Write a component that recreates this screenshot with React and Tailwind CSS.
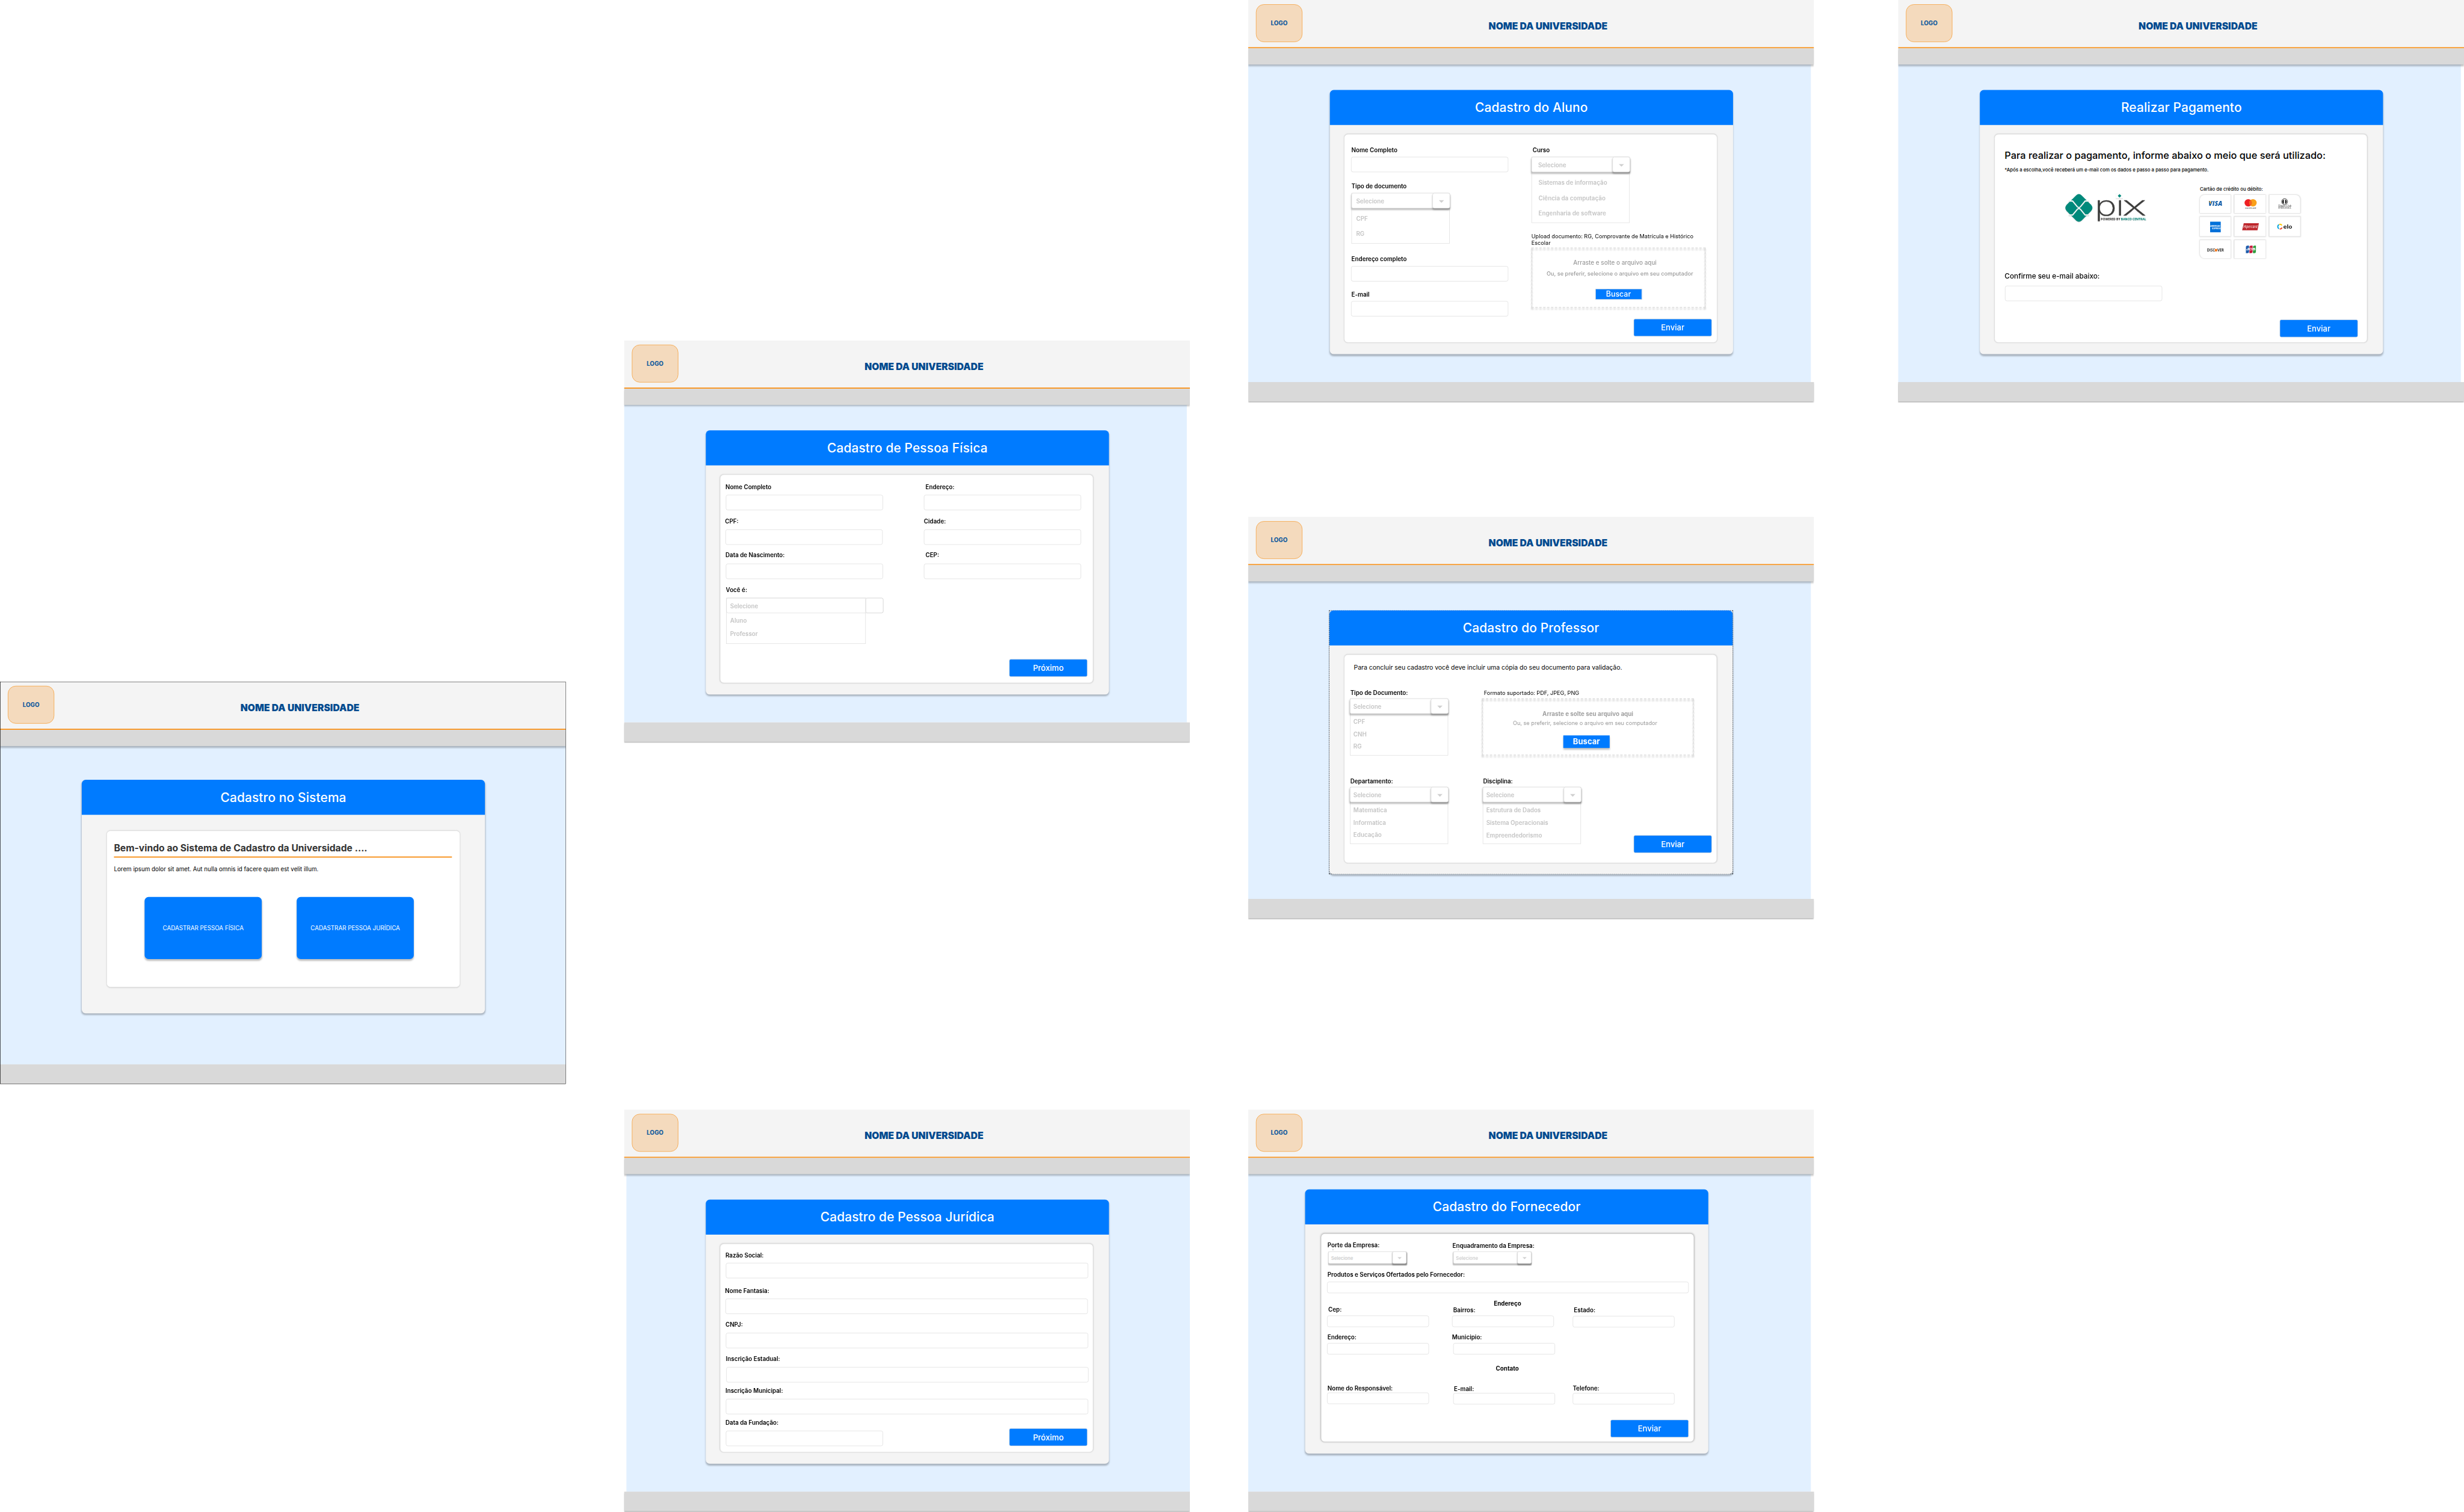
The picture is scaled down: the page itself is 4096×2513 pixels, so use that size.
import React from "react";

function Frame({ place, body = "w-[1432px]", outlined = false, children }) {
  return (
    <section className={`absolute flex h-[1024px] w-[1440px] flex-col overflow-hidden ${place}`}>
      <header className="flex h-[120px] shrink-0 items-start bg-[#f4f4f4]">
        <div className="mt-[11px] ml-5 flex h-24 w-[118px] items-center justify-center rounded-[20px] border border-[#f7931e] bg-[#f4dabd] pt-px text-[15px] font-extrabold text-[#1a5f9f]">
          LOGO
        </div>
        <h1 className="mt-[52px] ml-[474px] text-[24px] leading-[30px] font-black text-[#004a8f]">NOME DA UNIVERSIDADE</h1>
      </header>
      <div className="h-[3px] shrink-0 bg-[#f7931e]" />
      <div className="z-10 h-[41px] shrink-0 bg-[#d9d9d9] shadow-[0_4px_4px_rgba(0,0,0,0.25)]" />
      <main className={`flex flex-1 flex-col items-start bg-[#e2f0ff] ${body}`}>{children}</main>
      {outlined ? (
        <footer className="h-[50px] shrink-0 bg-[#d9d9d9]" />
      ) : (
        <div className="h-[52px] shrink-0">
          <footer className="h-[49px] bg-[#d9d9d9] shadow-[0_4px_4px_rgba(0,0,0,0.25)]" />
        </div>
      )}
      {outlined && <div className="pointer-events-none absolute inset-0 z-20 border border-black" />}
    </section>
  );
}

function Card({ title, place, panel, children }) {
  return (
    <div className={`flex w-[1026px] flex-col items-start rounded-[10px] bg-[#f4f4f4] shadow-[0_4px_4px_rgba(0,0,0,0.25)] ${place}`}>
      <h2 className="flex h-[89px] w-full shrink-0 items-center justify-center rounded-t-[10px] bg-[#007bff] pt-px text-[32px] font-medium tracking-[0.2px] text-white [font-weight:550]">
        {title}
      </h2>
      <div className={`rounded-[10px] border bg-white ${panel}`}>{children}</div>
    </div>
  );
}

const PANEL = "border-[#d9d9d9] shadow-[0_0_3px_rgba(0,0,0,0.12)]";

const Label = ({ className = "", children }) => (
  <div className={`h-[18px] translate-x-px translate-y-px text-[15px] leading-[18px] font-semibold whitespace-nowrap text-black ${className}`}>{children}</div>
);

const Box = ({ className = "" }) => <div className={`shrink-0 rounded-[5px] border border-[#d9d9d9] bg-white ${className}`} />;

const Option = ({ className = "", children }) => (
  <div className={`h-[18px] translate-y-px text-[15px] leading-[18px] font-semibold whitespace-nowrap text-[#c4c4c4] ${className}`}>{children}</div>
);

const Submit = ({ className = "", children }) => (
  <button className={`block h-[45px] w-[199px] shrink-0 rounded-[4px] border border-[#d9d9d9] bg-[#007bff] text-[20px] font-medium text-white ${className}`}>{children}</button>
);

const Arrow = ({ className }) => (
  <svg viewBox="0 0 14 7" className={className}>
    <path d="M0 0H14L7 7Z" fill="#d0d0d0" />
  </svg>
);

function DropZone({ className, children }) {
  return (
    <div className={`relative flex flex-col items-center ${className}`}>
      <div className="pointer-events-none absolute inset-0 border-2 border-dashed border-[#d9d9d9] drop-shadow-[0_4px_2px_rgba(0,0,0,0.25)]" />
      {children}
    </div>
  );
}

function Select({ className, pad, children }) {
  return (
    <div className={`w-[250px] border border-[#d9d9d9] ${className}`}>
      <div className="-m-px flex h-[39px] w-[250px] items-center justify-between rounded-[4px] border border-[#d9d9d9] bg-white shadow-[0_4px_4px_rgba(0,0,0,0.25)]">
        <Option className={pad}>Selecione</Option>
        <span className="-mr-[2px] flex h-[39px] w-[45px] items-center justify-center rounded-[5px] border border-[#d9d9d9] bg-white pt-[3px] shadow-[0_4px_4px_rgba(0,0,0,0.25)]">
          <Arrow className="h-[7px] w-[14px]" />
        </span>
      </div>
      <div className={pad}>{children}</div>
    </div>
  );
}

function SmallSelect({ className }) {
  return (
    <div className={`h-[35px] w-[199px] border-x border-[#e2e2e2] ${className}`}>
      <div className="-mx-px flex h-[31px] w-[199px] items-center justify-between rounded-[4px] border border-[#d9d9d9] bg-white shadow-[0_3px_3px_rgba(0,0,0,0.25)]">
        <span className="ml-[6px] pt-[2px] text-[11.8px] leading-[14px] font-semibold text-[#cdcdcd]">Selecione</span>
        <span className="-mr-px flex h-[31px] w-[36px] items-center justify-center rounded-[4px] border border-[#d9d9d9] bg-white pt-[3px] shadow-[0_3px_3px_rgba(0,0,0,0.3)]">
          <Arrow className="h-[5.5px] w-[11px]" />
        </span>
      </div>
    </div>
  );
}

function Sistema() {
  const tile = "flex h-[158px] w-[298px] items-center justify-center rounded-[10px] bg-[#007bff] text-[15px] text-white shadow-[0_4px_4px_rgba(0,0,0,0.25)]";
  return (
    <Frame place="left-0 top-[1734px]" body="w-full" outlined>
      <Card title="Cadastro no Sistema" place="mt-[86px] ml-[208px] h-[594px]" panel={`mt-[40px] ml-[63px] h-[399px] w-[900px] ${PANEL}`}>
        <h3 className="mt-[29px] ml-[18px] text-[24px] leading-[30px] font-semibold whitespace-nowrap text-[#333333] [font-weight:650]">
          Bem-vindo ao Sistema de Cadastro da Universidade ....
        </h3>
        <hr className="mt-[6px] ml-[18px] h-[3px] w-[860px] border-0 bg-[#f7931e]" />
        <p className="mt-[19px] ml-[18px] text-[15px] leading-[20px] text-black">Lorem ipsum dolor sit amet. Aut nulla omnis id facere quam est velit illum.</p>
        <div className="mt-[61px] ml-[96px] flex gap-[89px]">
          <div className={tile}>CADASTRAR PESSOA FÍSICA</div>
          <div className={tile}>CADASTRAR PESSOA JURÍDICA</div>
        </div>
      </Card>
    </Frame>
  );
}

function PessoaFisica() {
  return (
    <Frame place="left-[1588px] top-[866px]">
      <Card title="Cadastro de Pessoa Física" place="mt-[65px] ml-[208px] h-[672px]" panel={`mt-[23px] ml-[36px] flex h-[531px] w-[950px] items-start ${PANEL}`}>
        <div className="w-[518px] pl-[14px]">
          <Label className="mt-[21px] -ml-[2px]">Nome Completo</Label>
          <Box className="mt-[12px] h-[39px] w-[400px]" />
          <Label className="mt-[19px] -ml-[3px]">CPF:</Label>
          <Box className="mt-[12px] -ml-px h-[39px] w-[400px]" />
          <Label className="mt-[17px] -ml-[2px]">Data de Nascimento:</Label>
          <Box className="mt-[13px] h-[39px] w-[400px]" />
          <Label className="mt-[18px] -ml-px">Você é:</Label>
          <div className="mt-[12px] ml-px w-[355px]">
            <div className="flex h-[39px] w-[400px] items-center justify-between rounded-[5px] border border-[#d9d9d9]">
              <Option className="ml-[9px] pt-px">Selecione</Option>
              <span className="-mr-px h-[39px] w-[45px] rounded-[5px] border border-[#d9d9d9]" />
            </div>
            <div className="-mt-[39px] h-[117px] border border-[#d9d9d9] pl-[9px]">
              <Option className="mt-[48px]">Aluno</Option>
              <Option className="mt-[15px]">Professor</Option>
            </div>
          </div>
        </div>
        <div>
          <Label className="mt-[21px] ml-[3px]">Endereço:</Label>
          <Box className="mt-[12px] h-[39px] w-[400px]" />
          <Label className="mt-[19px] -ml-px">Cidade:</Label>
          <Box className="mt-[12px] h-[39px] w-[400px]" />
          <Label className="mt-[17px] ml-[3px]">CEP:</Label>
          <Box className="mt-[13px] h-[39px] w-[400px]" />
          <Submit className="mt-[204px] ml-[217px]">Próximo</Submit>
        </div>
      </Card>
    </Frame>
  );
}

function PessoaJuridica() {
  return (
    <Frame place="left-[1588px] top-[2823px]" body="ml-[6px] w-[1434px]">
      <Card title="Cadastro de Pessoa Jurídica" place="mt-[65px] ml-[202px] h-[672px]" panel={`mt-[23px] ml-[36px] h-[531px] w-[950px] pl-[14px] ${PANEL}`}>
        <Label className="mt-[20px] -ml-[2px]">Razão Social:</Label>
        <Box className="mt-[10px] h-[39px] w-[922px]" />
        <Label className="mt-[22px] -ml-[3px]">Nome Fantasia:</Label>
        <Box className="mt-[12px] -ml-px h-[39px] w-[922px]" />
        <Label className="mt-[18px] -ml-[2px]">CNPJ:</Label>
        <Box className="mt-[12px] h-[39px] w-[922px]" />
        <Label className="mt-[18px] -ml-px">Inscrição Estadual:</Label>
        <Box className="mt-[12px] ml-px h-[39px] w-[922px]" />
        <Label className="mt-[12px] -ml-[2px]">Inscrição Municipal:</Label>
        <Box className="mt-[12px] h-[39px] w-[922px]" />
        <div className="mt-[12px] flex items-end gap-[321px]">
          <div>
            <Label className="-ml-[2px]">Data da Fundação:</Label>
            <Box className="mt-[12px] h-[39px] w-[400px]" />
          </div>
          <Submit>Próximo</Submit>
        </div>
      </Card>
    </Frame>
  );
}

function Aluno() {
  return (
    <Frame place="left-[3176px] top-0">
      <Card title="Cadastro do Aluno" place="mt-[65px] ml-[208px] h-[672px]" panel={`mt-[23px] ml-[36px] flex h-[531px] w-[950px] items-start ${PANEL}`}>
        <div className="w-[476px] pl-[17px]">
          <Label className="mt-[31px]">Nome Completo</Label>
          <Box className="mt-[8px] h-[39px] w-[400px]" />
          <Label className="mt-[26px]">Tipo de documento</Label>
          <Select className="mt-[9px] ml-px h-[129px]" pad="pl-[11px]">
            <Option className="mt-[18px]">CPF</Option>
            <Option className="mt-[20px]">RG</Option>
          </Select>
          <Label className="mt-[29px]">Endereço completo</Label>
          <Box className="mt-[10px] h-[39px] w-[400px]" />
          <Label className="mt-[24px]">E-mail</Label>
          <Box className="mt-[8px] h-[39px] w-[400px]" />
        </div>
        <div>
          <Label className="mt-[30px] ml-[2px]">Curso</Label>
          <Select className="mt-[9px] h-[168px]" pad="pl-[16px]">
            <Option className="mt-[18px] ml-px">Sistemas de informação</Option>
            <Option className="mt-[21px] ml-px">Ciência da computação</Option>
            <Option className="mt-[21px] ml-px">Engenharia de software</Option>
          </Select>
          <p className="mt-[25px] h-[34px] w-[442px] text-[14px] leading-[17px] text-black">Upload documento: RG, Comprovante de Matrícula e Histórico Escolar</p>
          <DropZone className="mt-[4px] h-[153px] w-[443px] pt-[2px]">
            <p className="mt-[27px] mr-[18px] text-[15px] leading-[18px] font-medium tracking-[0.08px] text-[#999999]">Arraste e solte o arquivo aqui</p>
            <p className="mt-[10px] ml-[7px] text-[14px] leading-[18px] font-medium tracking-[0.04px] whitespace-nowrap text-[#999999]">
              Ou, se preferir, selecione o arquivo em seu computador
            </p>
            <button className="mt-[30px] h-[27px] w-[118px] border border-[#d9d9d9] bg-[#007bff] text-[19px] leading-[25px] font-medium text-white">Buscar</button>
          </DropZone>
          <Submit className="mt-[28px] ml-[260px]">Enviar</Submit>
        </div>
      </Card>
    </Frame>
  );
}

function Professor() {
  return (
    <Frame place="left-[3176px] top-[1315px]">
      <div className="mt-[74px] ml-[206px] h-[671px] w-[1028px] border border-dashed border-black">
        <Card title="Cadastro do Professor" place="-mt-px h-[671px]" panel={`mt-[23px] ml-[37px] h-[531px] w-[949px] ${PANEL}`}>
          <p className="mt-[22px] ml-[24px] text-[16px] leading-[20px] text-black">Para concluir seu cadastro você deve incluir uma cópia do seu documento para validação.</p>
          <div className="mt-[45px] ml-[14px] flex gap-[86px]">
            <div>
              <Label>Tipo de Documento:</Label>
              <Select className="mt-[6px] h-[145px]" pad="pl-[8px]">
                <Option className="mt-[11px]">CPF</Option>
                <Option className="mt-[14px]">CNH</Option>
                <Option className="mt-[13px]">RG</Option>
              </Select>
            </div>
            <div>
              <p className="ml-[5px] h-[18px] translate-y-px text-[14px] leading-[18px] text-black">Formato suportado: PDF, JPEG, PNG</p>
              <DropZone className="mt-[6px] h-[145px] w-[539px] pt-[2px]">
                <p className="mt-[28px] text-[15px] leading-[18px] font-bold text-[#a0a0a0]">Arraste e solte seu arquivo aqui</p>
                <p className="mt-[6px] mr-[14px] text-[14px] leading-[18px] text-[#999999]">Ou, se preferir, selecione o arquivo em seu computador</p>
                <button className="mt-[22px] mr-[7px] h-[32px] w-[118px] bg-[#007bff] text-[20px] leading-[30px] font-bold text-white shadow-[0_4px_4px_rgba(0,0,0,0.25)]">
                  Buscar
                </button>
              </DropZone>
            </div>
          </div>
          <div className="mt-[56px] ml-[14px] flex items-start">
            <div>
              <Label>Departamento:</Label>
              <Select className="mt-[6px] h-[145px]" pad="pl-[8px]">
                <Option className="mt-[11px]">Matematica</Option>
                <Option className="mt-[15px]">Informatica</Option>
                <Option className="mt-[13px]">Educação</Option>
              </Select>
            </div>
            <div className="ml-[88px]">
              <Label>Disciplina:</Label>
              <Select className="mt-[6px] h-[145px]" pad="pl-[8px]">
                <Option className="mt-[11px]">Estrutura de Dados</Option>
                <Option className="mt-[15px]">Sistema Operacionais</Option>
                <Option className="mt-[14px]">Empreendedorismo</Option>
              </Select>
            </div>
            <Submit className="mt-[147px] ml-[134px]">Enviar</Submit>
          </div>
        </Card>
      </div>
    </Frame>
  );
}

function Fornecedor() {
  return (
    <Frame place="left-[3176px] top-[2823px]">
      <Card
        title="Cadastro do Fornecedor"
        place="mt-[39px] ml-[145px] h-[672px]"
        panel="mt-[23px] ml-[40px] h-[531px] w-[950px] border-[#b8b8b8] pl-[15px] shadow-[0_0_4px_rgba(0,0,0,0.2)]"
      >
        <div className="mt-[20px] flex h-[60px]">
          <div className="w-[318px]">
            <Label>Porte da Empresa:</Label>
            <div className="mt-[2px] ml-[14px] h-px w-[2px] bg-[#444444]" />
            <SmallSelect className="mt-[4px] ml-[3px]" />
          </div>
          <div>
            <Label className="mt-[1px]">Enquadramento da Empresa:</Label>
            <div className="mt-[1px] ml-[15px] h-px w-[2px] bg-[#444444]" />
            <SmallSelect className="mt-[4px] ml-[3px]" />
          </div>
        </div>
        <Label className="mt-[14px]">Produtos e Serviços Ofertados pelo Fornecedor:</Label>
        <Box className="mt-[10px] h-[29px] w-[920px]" />
        <Label className="mt-[17px] mr-[17px] text-center [font-weight:700]">Endereço</Label>
        <div className="-mt-[3px] flex h-[56px]">
          <div className="w-[318px]">
            <Label className="ml-[2px]">Cep:</Label>
            <Box className="mt-[7px] h-[29px] w-[259px]" />
          </div>
          <div className="w-[307px]">
            <Label className="mt-[2px] ml-[2px]">Bairros:</Label>
            <Box className="mt-[5px] h-[29px] w-[259px]" />
          </div>
          <div>
            <Label className="mt-[2px] ml-[2px]">Estado:</Label>
            <Box className="mt-[6px] h-[29px] w-[259px]" />
          </div>
        </div>
        <div className="mt-[15px] flex">
          <div className="w-[318px]">
            <Label>Endereço:</Label>
            <Box className="mt-[6px] h-[29px] w-[259px]" />
          </div>
          <div>
            <Label className="-mt-px -ml-px">Municipio:</Label>
            <Box className="mt-[7px] ml-[3px] h-[29px] w-[259px]" />
          </div>
        </div>
        <Label className="mt-[26px] mr-[18px] text-center [font-weight:700]">Contato</Label>
        <div className="mt-[32px] flex h-[51px]">
          <div className="w-[318px]">
            <Label>Nome do Responsável:</Label>
            <Box className="mt-[3px] h-[29px] w-[259px]" />
          </div>
          <div className="w-[307px]">
            <Label className="mt-[2px] ml-[4px]">E-mail:</Label>
            <Box className="mt-[2px] ml-[3px] h-[29px] w-[259px]" />
          </div>
          <div>
            <Label className="-ml-px">Telefone:</Label>
            <Box className="mt-[4px] h-[29px] w-[259px]" />
          </div>
        </div>
        <Submit className="mt-[39px] ml-[721px]">Enviar</Submit>
      </Card>
    </Frame>
  );
}

function PixLogo({ className }) {
  return (
    <svg viewBox="0 0 208 76" className={className}>
      <path d="M29 4Q36 -2.500 43 4L67 28Q74 36 67 44L43 68Q36 74.500 29 68L5 44Q-2 36 5 28Z" fill="#00897b" />
      <path d="M10 18.500H20L32 33Q36 37 40 33L52 18.500H62M10 54H20L32 39.500Q36 35.500 40 39.500L52 54H62" fill="none" stroke="#eef3f2" strokeWidth="3.200" />
      <g fontFamily="Inter" fontWeight="200" fill="#3c3c3b" stroke="#3c3c3b" strokeWidth="0.500">
        <text transform="translate(76 55) scale(1.4 1)" fontSize="68">p</text>
        <text transform="translate(130 55) scale(1.4 1)" fontSize="68">i</text>
        <text transform="translate(146 55) scale(1.78 1)" fontSize="68">x</text>
      </g>
      <rect x="130" y="-1" width="18" height="13" fill="white" />
      <path d="M139.500 0.500L144 5.300L139.500 10L135 5.300Z" fill="#00897b" />
      <text x="92" y="68" fontFamily="Open Sans" fontWeight="700" fontSize="7.800" textLength="115" lengthAdjust="spacingAndGlyphs" fill="#3c3c3b">
        POWERED BY <tspan fill="#00897b">BANCO CENTRAL</tspan>
      </text>
    </svg>
  );
}

const Brand = ({ children }) => (
  <svg viewBox="0 0 78 46" className="h-[46px] w-[78px]">
    {children}
  </svg>
);

function Brands() {
  const tile = "flex items-center justify-center rounded-[1px] bg-white shadow-[0_0_3px_1px_rgba(0,0,0,0.13)]";
  return (
    <div className="grid grid-cols-[78px_79px_78px] grid-rows-[46px_49px_46px] gap-x-[10px] gap-y-[10px]">
      <div className={`${tile} rounded-tl-[12px]`}>
        <Brand>
          <text x="22" y="27.500" fontFamily="Open Sans" fontWeight="800" fontStyle="italic" fontSize="15" textLength="35" lengthAdjust="spacingAndGlyphs" fill="#0e5ba8">VISA</text>
          <path d="M22 16.300H27L29.500 24Q26.500 19 22 16.300Z" fill="#f7a11a" />
        </Brand>
      </div>
      <div className={tile}>
        <Brand>
          <circle cx="34" cy="20" r="9.500" fill="#ee2024" />
          <circle cx="46" cy="20" r="9.500" fill="#f9a01b" />
          <path d="M40 12.600A9.500 9.500 0 0 1 40 27.400A9.500 9.500 0 0 1 40 12.600Z" fill="#f26522" />
          <text x="26" y="34.500" fontFamily="Inter" fontSize="5" textLength="28" lengthAdjust="spacingAndGlyphs" fill="#333333">mastercard</text>
        </Brand>
      </div>
      <div className={`${tile} rounded-tr-[12px]`}>
        <Brand>
          <circle cx="38.500" cy="17" r="7.600" fill="white" stroke="#111111" strokeWidth="1.200" />
          <path d="M36.500 11.500A5.800 5.800 0 0 0 36.500 22.500ZM40 11.500A5.800 5.800 0 0 1 40 22.500Z" fill="#111111" />
          <text x="22.500" y="30.500" fontFamily="Liberation Serif" fontSize="8" textLength="33" lengthAdjust="spacingAndGlyphs" fill="#333333">Diners Club</text>
          <text x="22.500" y="35" fontFamily="Liberation Serif" fontSize="4.500" textLength="33" lengthAdjust="spacingAndGlyphs" fill="#333333">INTERNATIONAL</text>
        </Brand>
      </div>
      <div className={tile}>
        <Brand>
          <rect x="26" y="10" width="27" height="27" fill="#0070d9" />
          <g fontFamily="Inter" fontWeight="700" fontSize="5.500" fill="white">
            <text x="26.500" y="23.500" textLength="25" lengthAdjust="spacingAndGlyphs">AMERICAN</text>
            <text x="31" y="29" textLength="22" lengthAdjust="spacingAndGlyphs">EXPRESS</text>
          </g>
        </Brand>
      </div>
      <div className={tile}>
        <Brand>
          <path d="M22.500 14H61L57.500 32H18.500Z" fill="#be262c" />
          <text x="21.500" y="26" fontFamily="Open Sans" fontStyle="italic" fontSize="9.500" textLength="36" lengthAdjust="spacingAndGlyphs" fill="white">Hipercard</text>
        </Brand>
      </div>
      <div className={tile}>
        <Brand>
          <g fill="none" strokeWidth="3">
            <path d="M24.500 17.300A5.800 5.800 0 0 1 31.500 19.500" stroke="#ffcb05" />
            <path d="M24 17.500A6.200 6.200 0 0 0 24 28" stroke="#00a4e0" />
            <path d="M32 25A5.800 5.800 0 0 1 26 28.600" stroke="#ef4123" />
          </g>
          <text x="35" y="27.500" fontFamily="Inter" fontWeight="700" fontSize="14" textLength="23" lengthAdjust="spacingAndGlyphs" fill="#1a1a1a">elo</text>
        </Brand>
      </div>
      <div className={`${tile} rounded-bl-[12px]`}>
        <Brand>
          <g fontFamily="Open Sans" fontWeight="700" fontSize="9.800" fill="#2b2b2b">
            <text x="18" y="29" textLength="20" lengthAdjust="spacingAndGlyphs">DISC</text>
            <text x="44.500" y="29" textLength="16.500" lengthAdjust="spacingAndGlyphs">VER</text>
          </g>
          <circle cx="41" cy="25.500" r="3.600" fill="#f47b20" />
        </Brand>
      </div>
      <div className={tile}>
        <Brand>
          <path d="M32 14H36V29Q36 33 32 33H28V18Q28 14 32 14Z" fill="#1c5bab" />
          <path d="M41 14H45V29Q45 33 41 33H37V18Q37 14 41 14Z" fill="#c4163a" />
          <path d="M50 14H53.500V29Q53.500 33 50 33H46V18Q46 14 50 14Z" fill="#2f9e3f" />
          <text x="28.500" y="26.500" fontFamily="Inter" fontWeight="800" fontSize="7.500" textLength="24" lengthAdjust="spacingAndGlyphs" fill="white">JCB</text>
        </Brand>
      </div>
    </div>
  );
}

function Pagamento() {
  return (
    <Frame place="left-[4830px] top-0">
      <Card title="Realizar Pagamento" place="mt-[65px] ml-[208px] h-[672px]" panel={`mt-[23px] ml-[37px] h-[531px] w-[949px] ${PANEL}`}>
        <h3 className="mt-[38px] ml-[25px] text-[25px] leading-[30px] font-normal whitespace-nowrap text-black [font-weight:450]">
          Para realizar o pagamento, informe abaixo o meio que será utilizado:
        </h3>
        <p className="mt-[14px] ml-[25px] text-[12px] leading-[16px] font-medium text-black">*Após a escolha,você receberá um e-mail com os dados e passo a passo para pagamento.</p>
        <div className="mt-[33px] ml-[178px] flex items-start">
          <PixLogo className="mt-[20px] h-[76px] w-[208px] overflow-visible drop-shadow-[0_1px_1px_rgba(0,0,0,0.25)]" />
          <div className="ml-[136px]">
            <p className="mb-[7px] text-[12px] leading-[16px] font-medium text-black">Cartão de crédito ou débito:</p>
            <Brands />
          </div>
        </div>
        <p className="mt-[35px] ml-[25px] text-[18px] leading-[22px] font-normal text-black [font-weight:450]">Confirme seu e-mail abaixo:</p>
        <Box className="mt-[13px] ml-[26px] h-[39px] w-[400px]" />
        <Submit className="mt-[47px] ml-[725px]">Enviar</Submit>
      </Card>
    </Frame>
  );
}

export default function App() {
  return (
    <div className="relative h-[2513px] w-[4096px] overflow-hidden bg-white">
      <div className="relative h-[3847px] w-[6270px] origin-top-left scale-[0.65327] font-['Inter',sans-serif] [font-optical-sizing:none]">
        <Sistema />
        <PessoaFisica />
        <PessoaJuridica />
        <Aluno />
        <Professor />
        <Fornecedor />
        <Pagamento />
      </div>
    </div>
  );
}
